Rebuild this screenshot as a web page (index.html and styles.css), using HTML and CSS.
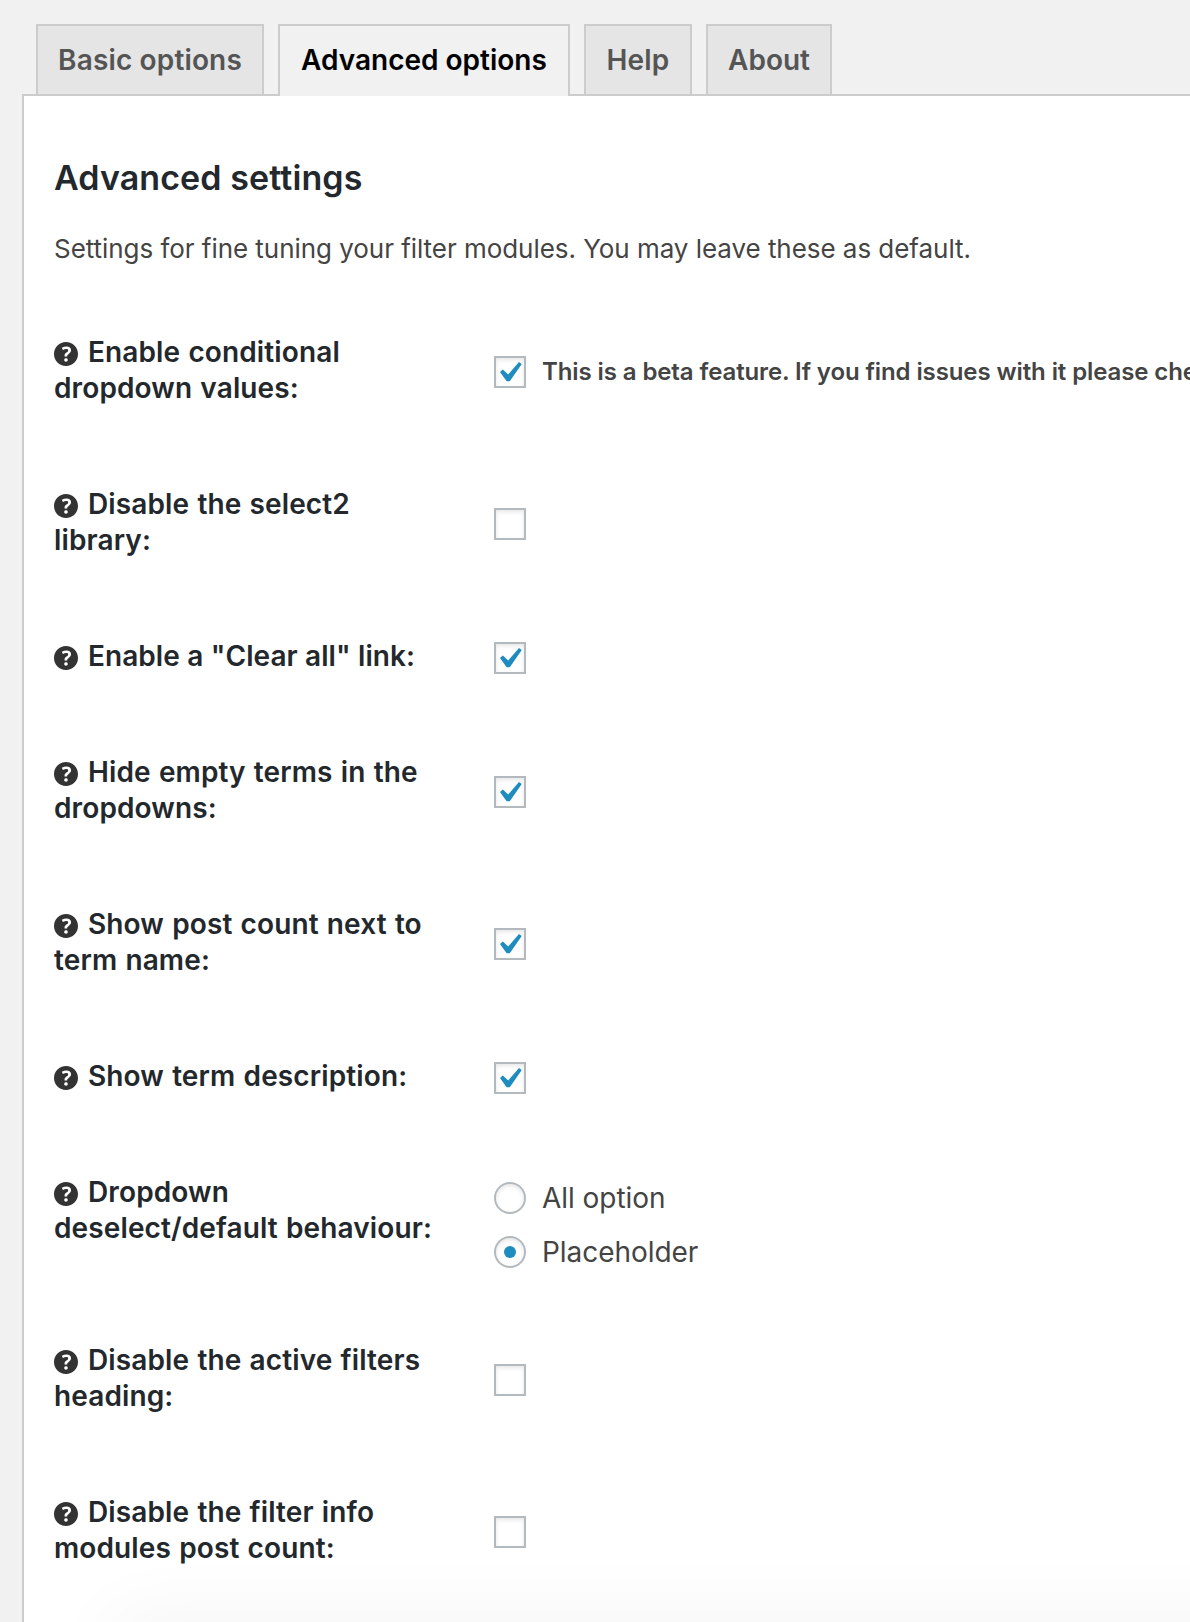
FILE: index.html
```html
<!DOCTYPE html>
<html lang="en">
<head>
<meta charset="utf-8">
<title>Advanced options</title>
<link rel="stylesheet" href="styles.css">
</head>
<body>
<svg class="sprite" aria-hidden="true">
  <symbol id="help" viewBox="3 3 14 14"><path d="M17 10c0-3.87-3.14-7-7-7-3.87 0-7 3.13-7 7s3.13 7 7 7c3.86 0 7-3.13 7-7zm-6.3 1.48H9.14v-.43c0-.38.08-.7.24-.98s.46-.57.88-.89c.41-.29.68-.53.81-.71.14-.18.2-.39.2-.62 0-.25-.09-.44-.28-.58-.19-.13-.45-.19-.79-.19-.58 0-1.25.19-2 .57l-.64-1.28c.87-.49 1.8-.74 2.77-.74.81 0 1.45.2 1.92.58.48.39.71.91.71 1.55 0 .43-.09.8-.29 1.11-.19.32-.57.67-1.11 1.06-.38.28-.61.49-.71.63-.1.15-.15.34-.15.57v.35zm-1.47 2.74c-.18-.17-.27-.42-.27-.73 0-.33.08-.58.26-.75s.43-.25.77-.25c.32 0 .57.09.75.26s.27.42.27.74c0 .3-.09.55-.27.72-.18.18-.43.27-.75.27-.33 0-.58-.09-.76-.27z"/></symbol>
  <symbol id="yes" viewBox="5.78 4.89 10.39 9.32"><path d="M14.83 4.89l1.34.94-5.81 8.38H9.02L5.78 9.67l1.34-1.25 2.57 2.4z"/></symbol>
</svg>
<nav class="tabs">
  <a class="tab tab-basic">Basic options</a>
  <a class="tab tab-advanced tab-active">Advanced options</a>
  <a class="tab tab-help">Help</a>
  <a class="tab tab-about">About</a>
</nav>
<main class="panel">
  <h2 class="title">Advanced settings</h2>
  <p class="intro">Settings for fine tuning your filter modules. You may leave these as default.</p>
  <div class="row">
    <div class="label"><svg class="help"><use href="#help"/></svg>Enable conditional<br>dropdown values:</div>
    <div class="field"><span class="box"><svg class="check"><use href="#yes"/></svg></span><strong class="note">This is a beta feature. If you find issues with it please check</strong></div>
  </div>
  <div class="row">
    <div class="label"><svg class="help"><use href="#help"/></svg>Disable the select2<br>library:</div>
    <div class="field"><span class="box"></span></div>
  </div>
  <div class="row">
    <div class="label label-tight"><svg class="help"><use href="#help"/></svg>Enable a "Clear all" link:</div>
    <div class="field"><span class="box"><svg class="check"><use href="#yes"/></svg></span></div>
  </div>
  <div class="row">
    <div class="label"><svg class="help"><use href="#help"/></svg>Hide empty terms in the<br>dropdowns:</div>
    <div class="field"><span class="box"><svg class="check"><use href="#yes"/></svg></span></div>
  </div>
  <div class="row">
    <div class="label"><svg class="help"><use href="#help"/></svg>Show post count next to<br>term name:</div>
    <div class="field"><span class="box"><svg class="check"><use href="#yes"/></svg></span></div>
  </div>
  <div class="row">
    <div class="label"><svg class="help"><use href="#help"/></svg>Show term description:</div>
    <div class="field"><span class="box"><svg class="check"><use href="#yes"/></svg></span></div>
  </div>
  <div class="row row-radios">
    <div class="label"><svg class="help"><use href="#help"/></svg>Dropdown<br>deselect/default behaviour:</div>
    <div class="field radios">
      <div class="choice"><span class="radio"></span><span>All option</span></div>
      <div class="choice"><span class="radio radio-on"></span><span>Placeholder</span></div>
    </div>
  </div>
  <div class="row">
    <div class="label"><svg class="help"><use href="#help"/></svg>Disable the active filters<br>heading:</div>
    <div class="field"><span class="box"></span></div>
  </div>
  <div class="row">
    <div class="label"><svg class="help"><use href="#help"/></svg>Disable the filter info<br>modules post count:</div>
    <div class="field"><span class="box"></span></div>
  </div>
  <div class="shade"></div>
</main>
</body>
</html>
```
FILE: styles.css
```css
* { box-sizing: border-box; }
body {
  margin: 0;
  height: 1622px;
  overflow: hidden;
  display: flex;
  flex-direction: column;
  background: #f1f1f1;
  color: #444;
  font: 28px/36px Inter, sans-serif;
}
.sprite { display: none; }
.tabs {
  display: flex;
  flex: none;
  gap: 14px;
  height: 96px;
  padding: 24px 0 0 36px;
}
.tab {
  flex: none;
  height: 70px;
  padding-top: 16px;
  border: 2px solid #ccc;
  border-bottom: 0;
  background: #e5e5e5;
  color: #555;
  font-weight: 600;
  text-align: center;
  white-space: nowrap;
}
.tab-basic { width: 228px; letter-spacing: .15px; }
.tab-advanced { width: 292px; }
.tab-help { width: 108px; letter-spacing: .2px; }
.tab-about { width: 126px; }
.tab-active {
  z-index: 1;
  height: 72px;
  background: #f1f1f1;
  color: #000;
}
.panel {
  position: relative;
  flex: 1;
  margin: -2px 0 0 22px;
  padding: 62px 0 0 30px;
  border: solid #ccc;
  border-width: 2px 0 0 2px;
  background: #fff;
  overflow: hidden;
}
.title {
  margin: 0;
  color: #23282d;
  font-size: 34px;
  font-weight: 600;
  letter-spacing: .1px;
  line-height: 40px;
}
.intro {
  margin: 31px 0 26px;
  font-size: 26px;
  letter-spacing: -.045px;
  line-height: 39px;
  white-space: nowrap;
}
.row {
  display: grid;
  grid-template-columns: 440px 1fr;
  padding: 40px 0;
}
.label {
  color: #23282d;
  font-weight: 600;
  letter-spacing: .12px;
  white-space: nowrap;
  word-spacing: 1px;
}
.label-tight { letter-spacing: .05px; word-spacing: .3px; }
.help {
  width: 24px;
  height: 24px;
  margin-right: 10px;
  vertical-align: -4px;
  fill: #333;
}
.field {
  display: flex;
  align-items: center;
  padding-top: 4px;
  height: 100%;
  min-width: 0;
}
.box, .radio {
  display: flex;
  flex: none;
  width: 32px;
  height: 32px;
  border: 2px solid #b4b9be;
  background: #fff;
  box-shadow: inset 0 2px 4px rgba(0, 0, 0, .1);
}
.check {
  width: 21.8px;
  height: 19.6px;
  margin: 4.3px 0 0 4.1px;
  fill: #1e8cbe;
}
.note {
  flex: 1;
  min-width: 0;
  margin-left: 16px;
  overflow: hidden;
  font-size: 24px;
  font-weight: 600;
  letter-spacing: -.1px;
  white-space: nowrap;
}
.row-radios { height: 168px; }
.radios {
  flex-direction: column;
  align-items: flex-start;
  gap: 18px;
  padding-top: 6px;
}
.choice {
  display: flex;
  align-items: center;
  gap: 16px;
  height: 36px;
  letter-spacing: -.05px;
}
.radio {
  align-items: center;
  justify-content: center;
  border-radius: 50%;
}
.radio-on::before {
  content: "";
  width: 12px;
  height: 12px;
  border-radius: 50%;
  background: #1e8cbe;
}
.shade {
  position: absolute;
  left: 90px;
  right: -100px;
  bottom: -60px;
  height: 60px;
  box-shadow: 0 0 80px rgba(0, 0, 0, .055);
}
```
